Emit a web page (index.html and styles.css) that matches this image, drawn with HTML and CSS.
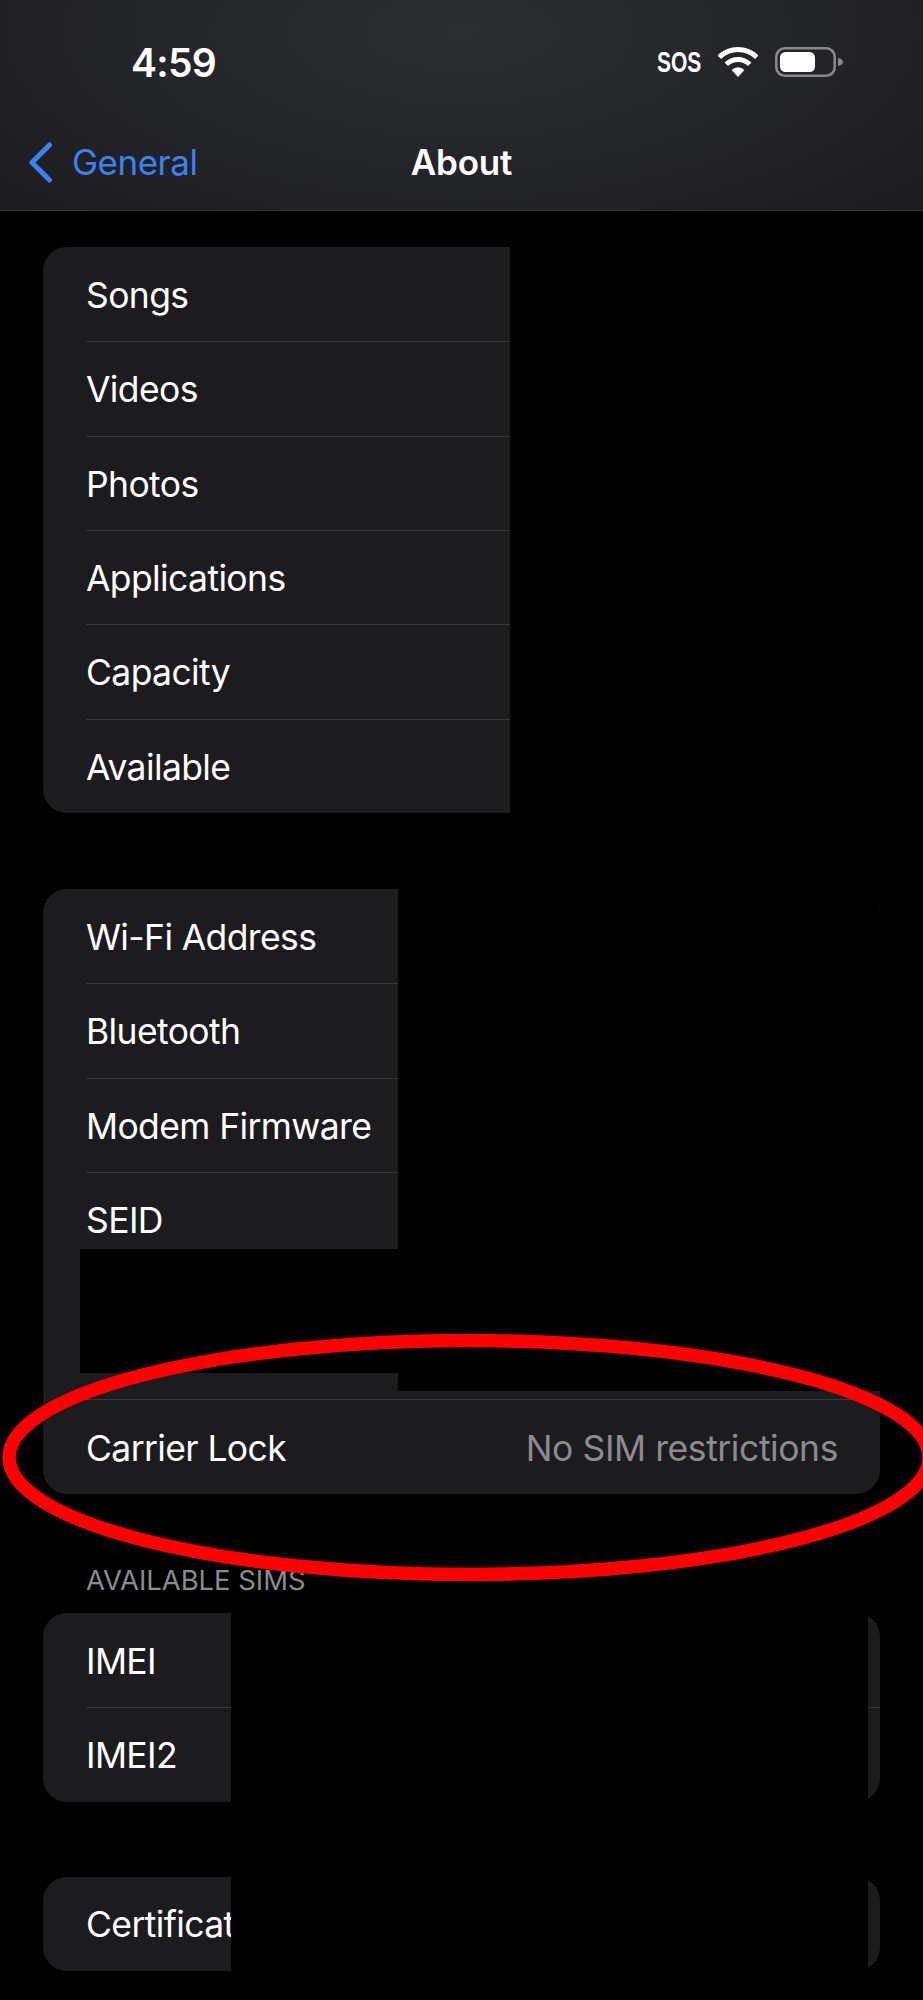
FILE: index.html
```html
<!DOCTYPE html>
<html lang="en">
<head>
<meta charset="utf-8">
<title>About</title>
<link rel="stylesheet" href="styles.css">
</head>
<body>
<div class="screen">
  <header class="header">
    <div class="status">
      <span class="time">4:59</span>
      <div class="status-icons">
        <span class="sos-box"><span class="sos">SOS</span></span>
        <svg class="wifi" viewBox="0 0 40 30" width="40" height="30" aria-hidden="true">
          <path d="M1.3 10.3A26.5 26.5 0 0 1 38.7 10.3" fill="none" stroke="#fff" stroke-width="5"/>
          <path d="M8.3 17.3A16.5 16.5 0 0 1 31.7 17.3" fill="none" stroke="#fff" stroke-width="5"/>
          <path d="M20 30L13.6 23A9 9 0 0 1 26.4 23Z" fill="#fff"/>
        </svg>
        <svg class="battery" viewBox="0 0 68 30" width="68" height="30" aria-hidden="true">
          <rect x="1.3" y="1.3" width="58.4" height="27.4" rx="8.5" fill="none" stroke="#88888c" stroke-width="2.6"/>
          <rect x="5" y="5" width="35" height="20" rx="5.5" fill="#fff"/>
          <path d="M63 11C66 11.6 68 13 68 15S66 18.4 63 19Z" fill="#88888c"/>
        </svg>
      </div>
    </div>
    <nav class="nav">
      <div class="back">
        <svg class="chevron" viewBox="0 0 25 41" width="25" height="41" aria-hidden="true">
          <path d="M21.5 3L4 20.5L21.5 38" fill="none" stroke="#3b82f0" stroke-width="5" stroke-linecap="round" stroke-linejoin="round"/>
        </svg>
        <span class="back-label">General</span>
      </div>
      <h1 class="title">About</h1>
    </nav>
  </header>

  <main class="content">
    <section class="card card-media">
      <div class="row"><span>Songs</span></div>
      <div class="row"><span>Videos</span></div>
      <div class="row"><span>Photos</span></div>
      <div class="row"><span>Applications</span></div>
      <div class="row"><span>Capacity</span></div>
      <div class="row"><span>Available</span></div>
      <div class="redact redact-media"></div>
    </section>

    <section class="card card-network">
      <div class="row"><span>Wi-Fi Address</span></div>
      <div class="row"><span>Bluetooth</span></div>
      <div class="row"><span>Modem Firmware</span></div>
      <div class="row row-seid"><span>SEID</span></div>
      <div class="row row-last"><span>Carrier Lock</span><span class="value">No SIM restrictions</span></div>
      <div class="redact redact-network-side"></div>
      <div class="redact redact-network-block"></div>
    </section>

    <h2 class="section-label">AVAILABLE SIMS</h2>

    <section class="card card-sims">
      <div class="row"><span>IMEI</span></div>
      <div class="row"><span>IMEI2</span></div>
      <div class="redact redact-values"></div>
    </section>

    <section class="card card-cert">
      <div class="row"><span>Certificate Trust Settings</span></div>
      <div class="redact redact-values"></div>
    </section>
  </main>

  <svg class="annotation" viewBox="0 0 923 2000" width="923" height="2000" aria-hidden="true">
    <ellipse cx="469" cy="1457.5" rx="460" ry="117" fill="none" stroke="#ff0000" stroke-width="13.5"/>
  </svg>
</div>
</body>
</html>
```

FILE: styles.css
```css
* {
  box-sizing: border-box;
}

html,
body {
  margin: 0;
  padding: 0;
  background: #000;
}

.screen {
  position: relative;
  width: 923px;
  height: 2000px;
  overflow: hidden;
  background: #000;
  color: #fff;
  font-family: Inter, "Liberation Sans", sans-serif;
}

.header {
  height: 211px;
  border-bottom: 1px solid #343436;
  background:
    radial-gradient(ellipse 620px 260px at 50% 15%, #2c2d30 0%, #232427 60%, #1c1c1e 100%);
}

.status {
  display: flex;
  align-items: center;
  justify-content: space-between;
  height: 124px;
  padding: 0 80px 0 131px;
}

.time {
  font-size: 39px;
  font-weight: 600;
  letter-spacing: -0.7px;
}

.status-icons {
  display: flex;
  align-items: center;
  gap: 17px;
}

.sos-box {
  display: block;
  width: 44px;
  height: 30px;
}

.sos {
  display: inline-block;
  font-family: "Liberation Sans", sans-serif;
  font-size: 30px;
  font-weight: 700;
  line-height: 30px;
  transform: scaleX(0.7);
  transform-origin: left center;
}

.wifi,
.battery {
  display: block;
}

.nav {
  position: relative;
  display: flex;
  align-items: center;
  justify-content: center;
  height: 76px;
}

.back {
  position: absolute;
  left: 28px;
  top: 0;
  display: flex;
  align-items: center;
  gap: 19px;
  height: 76px;
}

.chevron {
  display: block;
}

.back-label {
  color: #3b82f0;
  font-size: 35px;
  letter-spacing: -0.5px;
}

.title {
  margin: 0;
  font-size: 35px;
  font-weight: 600;
  letter-spacing: -0.2px;
}

.content {
  display: flex;
  flex-direction: column;
  padding: 36px 43px 0;
}

.card {
  position: relative;
  border-radius: 24px;
  background: #1c1c1e;
  overflow: hidden;
}

.card-network {
  margin-top: 76px;
}

.card-cert {
  margin-top: 75px;
}

.row {
  display: flex;
  align-items: center;
  justify-content: space-between;
  height: 94.33px;
  margin-left: 43px;
  padding: 2px 42px 0 0;
  font-size: 35.5px;
  letter-spacing: -0.62px;
  white-space: nowrap;
}

.row + .row {
  border-top: 1px solid #39393b;
}

.row-seid {
  align-items: flex-start;
  height: 227px;
  padding-top: 26px;
}

.row-last {
  height: 95px;
  padding-top: 3px;
}

.value {
  color: #8b8b90;
  letter-spacing: -0.42px;
}

.section-label {
  margin: 68px 0 15px;
  padding-left: 43px;
  color: #8b8b90;
  font-size: 27.4px;
  font-weight: 400;
  line-height: 36px;
}

.redact {
  position: absolute;
  background: #000;
}

.redact-media {
  top: 0;
  right: 0;
  bottom: 0;
  left: 467px;
}

.redact-network-side {
  top: 0;
  right: 0;
  left: 355px;
  height: 502px;
}

.redact-network-block {
  top: 360px;
  right: 0;
  left: 37px;
  height: 124px;
}

.redact-values {
  top: 0;
  bottom: 0;
  left: 188px;
  width: 637px;
}

.annotation {
  position: absolute;
  top: 0;
  left: 0;
  pointer-events: none;
}
```
